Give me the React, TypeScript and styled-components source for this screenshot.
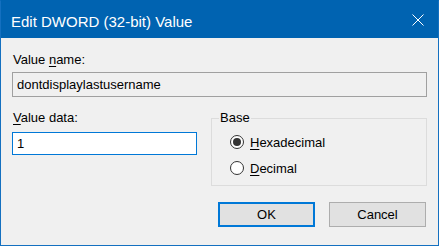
import styled, { createGlobalStyle } from "styled-components"

const GlobalStyle = createGlobalStyle`
    html, body {
        margin: 0;
        padding: 0;
        background: #fff;
    }
    body {
        font-family: "Liberation Sans", Arial, sans-serif;
        color: #000;
    }
`

const Window = styled.div`
    box-sizing: border-box;
    width: 439px;
    height: 246px;
    display: flex;
    flex-direction: column;
    background: #f0f0f0;
    border: 1px solid #1470c0;
    border-top-color: #0063b1;
`

const TitleBar = styled.div`
    height: 37px;
    flex: none;
    display: flex;
    align-items: center;
    background: #0063b1;
    color: #fff;
`

const Title = styled.span`
    flex: 1;
    padding: 3px 0 0 10px;
    font-size: 15px;
`

const CloseButton = styled.div`
    width: 40px;
    height: 100%;
    display: flex;
    align-items: center;
    justify-content: center;
`

const Body = styled.div`
    flex: 1;
    display: flex;
    flex-direction: column;
    padding: 14px 11px 0 11px;
`

const Label = styled.div<{ $gap: number }>`
    font-size: 13px;
    line-height: 16px;
    padding-left: 1px;
    margin-bottom: ${p => p.$gap}px;
`

const Key = styled.span`
    text-decoration: underline;
    text-underline-offset: 2px;
`

const TextBox = styled.div<{ $focused?: boolean; $height: number }>`
    box-sizing: border-box;
    height: ${p => p.$height}px;
    display: flex;
    align-items: center;
    padding-left: 4px;
    font-size: 13px;
    background: ${p => (p.$focused ? "#fff" : "#f0f0f0")};
    border: 1px solid ${p => (p.$focused ? "#0078d7" : "#a0a0a0")};
`

const Lower = styled.div`
    display: grid;
    grid-template-columns: 185px 1fr;
    column-gap: 14px;
    margin-top: 13px;
`

const DataColumn = styled.div`
    display: flex;
    flex-direction: column;
`

const GroupBox = styled.fieldset`
    margin: 0;
    padding: 0 0 9px 7px;
    border: 1px solid #dcdcdc;
    min-width: 0;
    display: flex;
    flex-direction: column;
    gap: 10px;
`

const Legend = styled.legend`
    padding: 0 1px;
    font-size: 13px;
    line-height: 16px;
    margin-bottom: 8px;
`

const RadioRow = styled.label`
    display: flex;
    align-items: center;
    gap: 6px;
    height: 16px;
    margin-left: 11px;
    font-size: 13px;
`

const RadioCircle = styled.span<{ $checked?: boolean }>`
    box-sizing: border-box;
    width: 14px;
    height: 14px;
    border-radius: 50%;
    border: 1px solid #333;
    background: #fff;
    display: flex;
    align-items: center;
    justify-content: center;

    &::after {
        content: "";
        display: ${p => (p.$checked ? "block" : "none")};
        width: 8px;
        height: 8px;
        border-radius: 50%;
        background: #333;
    }
`

const ButtonRow = styled.div`
    display: flex;
    justify-content: flex-end;
    gap: 14px;
    margin-top: 16px;
    padding-right: 1px;
`

const Button = styled.div<{ $default?: boolean }>`
    box-sizing: border-box;
    width: 97px;
    height: 25px;
    display: flex;
    align-items: center;
    justify-content: center;
    font-size: 13px;
    background: #e1e1e1;
    border: ${p => (p.$default ? "2px solid #0078d7" : "1px solid #adadad")};
`

const App = () => {
    return (
        <>
            <GlobalStyle />
            <Window>
                <TitleBar>
                    <Title>Edit DWORD (32-bit) Value</Title>
                    <CloseButton>
                        <svg width="12" height="12" viewBox="0 0 12 12">
                            <path d="M0.5 0.5 L11.5 11.5 M11.5 0.5 L0.5 11.5" stroke="#fff" strokeWidth="1" />
                        </svg>
                    </CloseButton>
                </TitleBar>
                <Body>
                    <Label $gap={4}>Value <Key>n</Key>ame:</Label>
                    <TextBox $height={25}>dontdisplaylastusername</TextBox>
                    <Lower>
                        <DataColumn>
                            <Label $gap={6}><Key>V</Key>alue data:</Label>
                            <TextBox $focused $height={23}>1</TextBox>
                        </DataColumn>
                        <GroupBox>
                            <Legend>Base</Legend>
                            <RadioRow>
                                <RadioCircle $checked />
                                <span><Key>H</Key>exadecimal</span>
                            </RadioRow>
                            <RadioRow>
                                <RadioCircle />
                                <span><Key>D</Key>ecimal</span>
                            </RadioRow>
                        </GroupBox>
                    </Lower>
                    <ButtonRow>
                        <Button $default>OK</Button>
                        <Button>Cancel</Button>
                    </ButtonRow>
                </Body>
            </Window>
        </>
    )
}

export default App
